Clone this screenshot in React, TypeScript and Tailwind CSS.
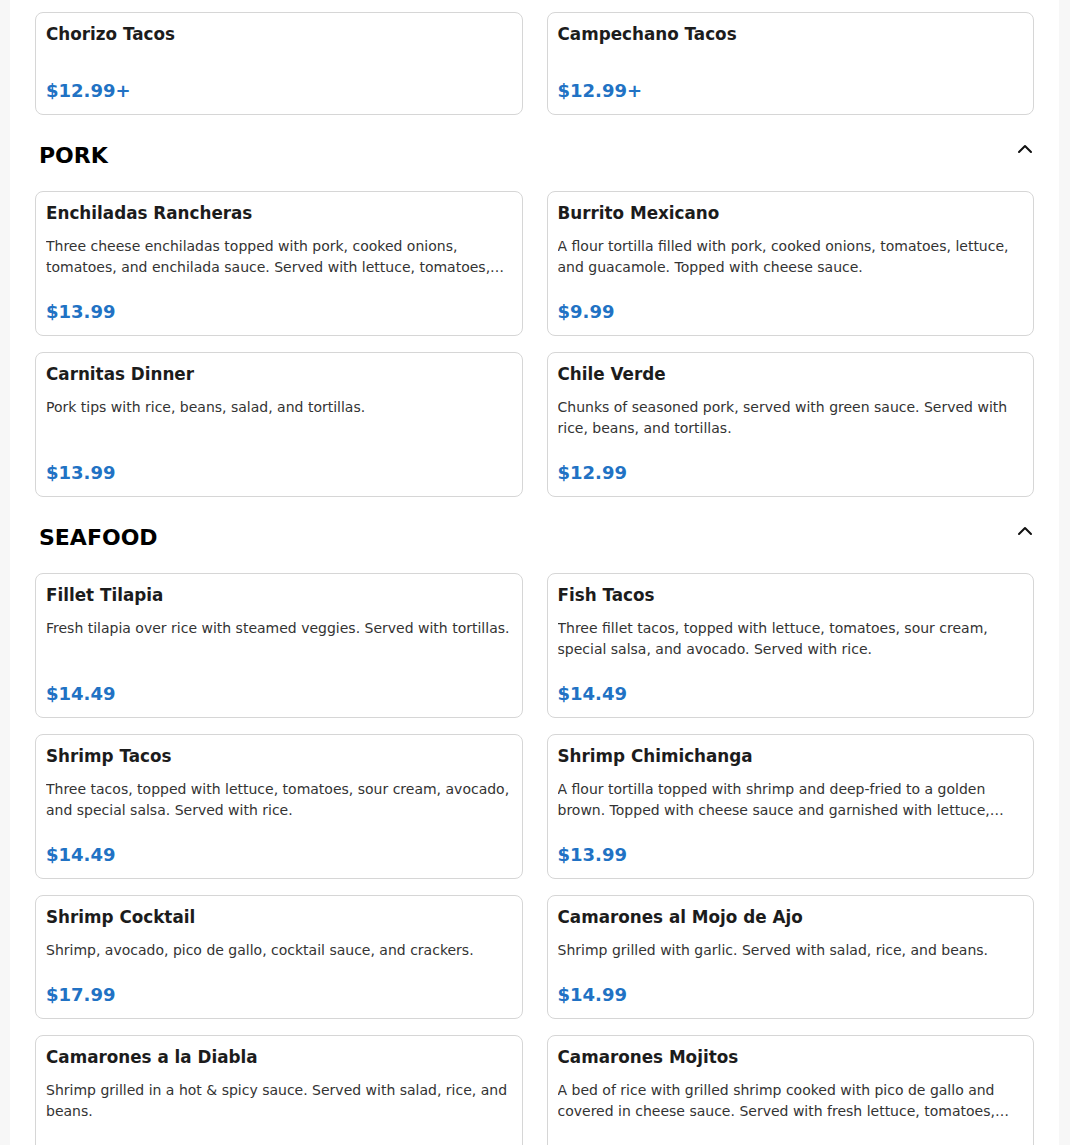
import { FC } from 'react'

type MenuItem = {
  name: string
  description?: string
  price: string
}

type Section = {
  title?: string
  items: MenuItem[]
}

const sections: Section[] = [
  {
    items: [
      { name: 'Chorizo Tacos', price: '$12.99+' },
      { name: 'Campechano Tacos', price: '$12.99+' },
    ],
  },
  {
    title: 'PORK',
    items: [
      {
        name: 'Enchiladas Rancheras',
        description:
          'Three cheese enchiladas topped with pork, cooked onions, tomatoes, and enchilada sauce. Served with lettuce, tomatoes, sour cream, and rice.',
        price: '$13.99',
      },
      {
        name: 'Burrito Mexicano',
        description: 'A flour tortilla filled with pork, cooked onions, tomatoes, lettuce, and guacamole. Topped with cheese sauce.',
        price: '$9.99',
      },
      { name: 'Carnitas Dinner', description: 'Pork tips with rice, beans, salad, and tortillas.', price: '$13.99' },
      {
        name: 'Chile Verde',
        description: 'Chunks of seasoned pork, served with green sauce. Served with rice, beans, and tortillas.',
        price: '$12.99',
      },
    ],
  },
  {
    title: 'SEAFOOD',
    items: [
      { name: 'Fillet Tilapia', description: 'Fresh tilapia over rice with steamed veggies. Served with tortillas.', price: '$14.49' },
      {
        name: 'Fish Tacos',
        description: 'Three fillet tacos, topped with lettuce, tomatoes, sour cream, special salsa, and avocado. Served with rice.',
        price: '$14.49',
      },
      {
        name: 'Shrimp Tacos',
        description: 'Three tacos, topped with lettuce, tomatoes, sour cream, avocado, and special salsa. Served with rice.',
        price: '$14.49',
      },
      {
        name: 'Shrimp Chimichanga',
        description:
          'A flour tortilla topped with shrimp and deep-fried to a golden brown. Topped with cheese sauce and garnished with lettuce, tomatoes, and sour cream.',
        price: '$13.99',
      },
      { name: 'Shrimp Cocktail', description: 'Shrimp, avocado, pico de gallo, cocktail sauce, and crackers.', price: '$17.99' },
      { name: 'Camarones al Mojo de Ajo', description: 'Shrimp grilled with garlic. Served with salad, rice, and beans.', price: '$14.99' },
      {
        name: 'Camarones a la Diabla',
        description: 'Shrimp grilled in a hot & spicy sauce. Served with salad, rice, and beans.',
        price: '$14.99',
      },
      {
        name: 'Camarones Mojitos',
        description:
          'A bed of rice with grilled shrimp cooked with pico de gallo and covered in cheese sauce. Served with fresh lettuce, tomatoes, and sour cream.',
        price: '$15.99',
      },
    ],
  },
]

const ChevronUp: FC = () => (
  <svg
    width="24"
    height="24"
    viewBox="0 0 24 24"
    fill="none"
    stroke="currentColor"
    strokeWidth="2"
    strokeLinecap="round"
    strokeLinejoin="round"
    className="-mt-[5px] -mr-[7px] shrink-0 text-[#111]"
  >
    <path d="m18 15-6-6-6 6" />
  </svg>
)

const ItemCard: FC<MenuItem> = ({ name, description, price }) => (
  <div className="flex flex-col rounded-lg border border-[#d6d6d6] bg-white px-[10px] pt-[10px] pb-[10px]">
    <h3 className="text-[16.8px] leading-[22px] font-bold text-[#1c1c1c]">{name}</h3>
    <div className="flex-1">
      {description && <p className="mt-3 line-clamp-2 text-[14px] leading-[21px] text-[#333]">{description}</p>}
    </div>
    <span className={`${description ? 'mt-[21px]' : 'mt-[33px]'} text-[18px] leading-[26px] font-bold text-[#2172c4]`}>
      {price}
    </span>
  </div>
)

export default function App() {
  return (
    <div
      className="min-h-screen bg-[#f7f7f7] pr-[11px] pl-[10px]"
      style={{ fontFamily: '"DejaVu Sans", Verdana, sans-serif' }}
    >
      <div className="bg-white px-[25px] pt-3 pb-10">
        {sections.map((section, i) => (
          <div key={i}>
            {section.title && (
              <div className="flex items-start justify-between px-1 pt-[27px] pb-[21px]">
                <h2 className="text-[22px] leading-[28px] font-bold text-black">{section.title}</h2>
                <ChevronUp />
              </div>
            )}
            <div className="grid grid-cols-2 gap-x-6 gap-y-4">
              {section.items.map((item) => (
                <ItemCard key={item.name} {...item} />
              ))}
            </div>
          </div>
        ))}
      </div>
    </div>
  )
}
